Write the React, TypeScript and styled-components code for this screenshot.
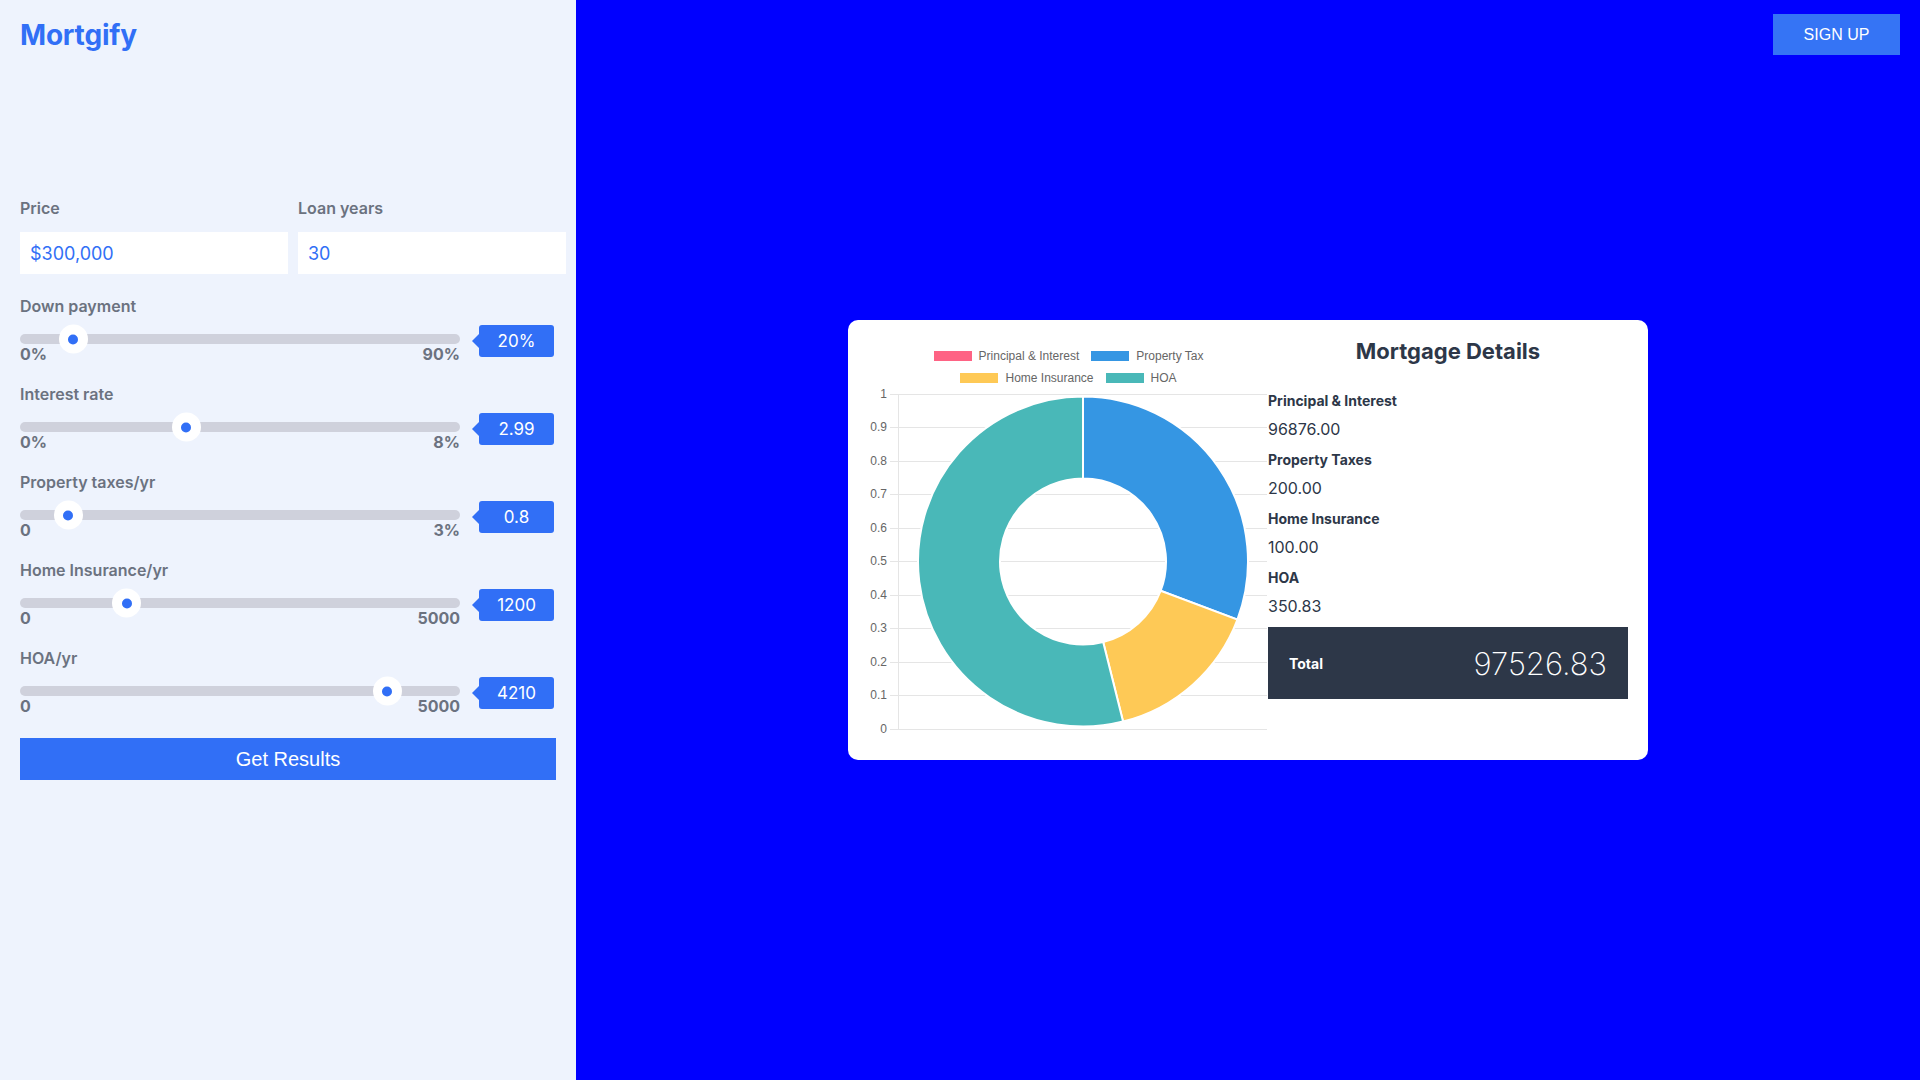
import React from 'react'
import styled, { createGlobalStyle } from 'styled-components'

const GlobalStyle = createGlobalStyle`
  * {
    box-sizing: border-box;
  }

  html,
  body {
    margin: 0;
    padding: 0;
  }

  body {
    font-family: Inter, 'Noto Sans', sans-serif;
  }
`

const Page = styled.div`
  display: flex;
  height: 1080px;
  overflow: hidden;
  width: 1920px;
`

const Sidebar = styled.aside`
  background: #eef3fd;
  flex-shrink: 0;
  padding: 17px 10px 0 20px;
  width: 576px;
`

const Logo = styled.h1`
  color: #316ff6;
  font-size: 28px;
  font-weight: 700;
  letter-spacing: -0.2px;
  line-height: 37px;
  margin: 0;
`

const Form = styled.form`
  margin-top: 144px;
`

const InputGrid = styled.div`
  column-gap: 10px;
  display: grid;
  grid-template-columns: 1fr 1fr;
  margin-bottom: 22px;
`

const FieldLabel = styled.label`
  color: #6b7280;
  display: block;
  font-size: 16px;
  font-weight: 600;
  line-height: 20px;
`

const TextInput = styled.input`
  background: #fff;
  border: none;
  color: #316ff6;
  display: block;
  font-family: Inter, sans-serif;
  font-size: 18px;
  height: 42px;
  margin-top: 14px;
  outline: none;
  padding: 0 10px;
  width: 100%;
`

const SliderBlock = styled.div`
  height: 88px;
`

const SliderRow = styled.div`
  align-items: flex-start;
  display: flex;
  gap: 19px;
`

const TrackColumn = styled.div`
  flex-shrink: 0;
  width: 440px;
`

const Track = styled.div`
  background: #cfd1dc;
  border-radius: 5px;
  height: 10px;
  margin-top: 18px;
  position: relative;
`

const Thumb = styled.span`
  background: #fff;
  border-radius: 50%;
  height: 29px;
  position: absolute;
  top: 50%;
  transform: translateY(-50%);
  width: 29px;

  &::after {
    background: #316ff6;
    border-radius: 50%;
    content: '';
    height: 10px;
    left: 50%;
    position: absolute;
    top: 50%;
    transform: translate(-50%, -50%);
    width: 10px;
  }
`

const RangeLabels = styled.div`
  color: #6b7280;
  display: flex;
  font-size: 16px;
  font-weight: 700;
  justify-content: space-between;
  line-height: 20px;
`

const ValueBadge = styled.div`
  align-items: center;
  background: #316ff6;
  border-radius: 3px;
  color: #fff;
  display: flex;
  font-size: 17px;
  height: 32px;
  justify-content: center;
  margin-top: 9px;
  position: relative;
  width: 75px;

  &::before {
    border-bottom: 7px solid transparent;
    border-right: 7px solid #316ff6;
    border-top: 7px solid transparent;
    content: '';
    left: -7px;
    position: absolute;
    top: 50%;
    transform: translateY(-50%);
  }
`

const SubmitButton = styled.button`
  background: #316ff6;
  border: none;
  color: #fff;
  display: block;
  font-family: 'Liberation Sans', Arial, sans-serif;
  font-size: 20px;
  height: 42px;
  margin-top: 2px;
  width: 536px;
`

const Main = styled.main`
  background: #0000ff;
  display: grid;
  flex: 1;
  grid-template-rows: 55px 1fr 55px;
`

const TopBar = styled.header`
  align-items: flex-start;
  display: flex;
  justify-content: flex-end;
  padding: 14px 20px 0 0;
`

const SignUp = styled.button`
  background: #3574f5;
  border: none;
  color: #fff;
  font-family: 'Liberation Sans', Arial, sans-serif;
  font-size: 16px;
  height: 41px;
  width: 127px;
`

const CardSlot = styled.div`
  align-items: center;
  display: flex;
  justify-content: center;
`

const Card = styled.section`
  background: #fff;
  border-radius: 10px;
  display: flex;
  height: 440px;
  padding: 17px 20px 0 10px;
  width: 800px;
`

const ChartColumn = styled.div`
  flex-shrink: 0;
  width: 410px;
`

const Legend = styled.div`
  margin-right: -11px;
  padding-top: 8px;
`

const LegendRow = styled.div`
  align-items: center;
  display: flex;
  gap: 12px;
  height: 22px;
  justify-content: center;
`

const LegendItem = styled.div`
  align-items: center;
  color: #666;
  display: flex;
  font-family: 'Liberation Sans', Arial, sans-serif;
  font-size: 12px;
  gap: 7px;
`

const Swatch = styled.span<{ $color: string }>`
  background: ${props => props.$color};
  display: block;
  height: 10px;
  width: 38px;
`

const ChartSvg = styled.svg`
  display: block;
  margin-top: -5px;
`

const Details = styled.div`
  color: #2d3748;
  width: 360px;
`

const DetailsTitle = styled.h2`
  font-size: 22px;
  font-weight: 700;
  line-height: 28px;
  margin: 0 0 26px;
  text-align: center;
`

const DetailLabel = styled.div`
  font-size: 14px;
  font-weight: 700;
  line-height: 20px;
  margin-bottom: 6px;
`

const DetailValue = styled.div`
  font-size: 16px;
  line-height: 24px;
  margin-bottom: 9px;
`

const TotalBox = styled.div`
  align-items: center;
  background: #2d3748;
  color: #fff;
  display: flex;
  height: 72px;
  justify-content: space-between;
  margin-top: 4px;
  padding: 0 21px;
`

const TotalLabel = styled.span`
  font-size: 14px;
  font-weight: 700;
`

const TotalValue = styled.span`
  font-size: 31px;
  font-weight: 200;
`

const sliders = [
  { label: 'Down payment', min: '0%', max: '90%', value: '20%', pos: 0.094 },
  { label: 'Interest rate', min: '0%', max: '8%', value: '2.99', pos: 0.369 },
  { label: 'Property taxes/yr', min: '0', max: '3%', value: '0.8', pos: 0.082 },
  { label: 'Home Insurance/yr', min: '0', max: '5000', value: '1200', pos: 0.225 },
  { label: 'HOA/yr', min: '0', max: '5000', value: '4210', pos: 0.858 },
]

const series = [
  { label: 'Principal & Interest', color: '#fe6384', value: 0 },
  { label: 'Property Tax', color: '#3596e3', value: 200 },
  { label: 'Home Insurance', color: '#fec956', value: 100 },
  { label: 'HOA', color: '#49b8b8', value: 350.83 },
]

const legendRows = [series.slice(0, 2), series.slice(2)]

const details = [
  { label: 'Principal & Interest', value: '96876.00' },
  { label: 'Property Taxes', value: '200.00' },
  { label: 'Home Insurance', value: '100.00' },
  { label: 'HOA', value: '350.83' },
]

const CX = 225
const CY = 177.5
const OUTER = 165
const INNER = 83
const TOP = 10
const STEP = 33.45

const arcPath = (a0: number, a1: number) => {
  const pt = (r: number, a: number) => `${CX + r * Math.sin(a)} ${CY - r * Math.cos(a)}`
  const large = a1 - a0 > Math.PI ? 1 : 0
  return [
    `M${pt(OUTER, a0)}`,
    `A${OUTER} ${OUTER} 0 ${large} 1 ${pt(OUTER, a1)}`,
    `L${pt(INNER, a1)}`,
    `A${INNER} ${INNER} 0 ${large} 0 ${pt(INNER, a0)}`,
    'Z',
  ].join(' ')
}

const DonutChart: React.FC = () => {
  const total = series.reduce((sum, s) => sum + s.value, 0)
  let angle = 0
  const slices = series
    .filter(s => s.value > 0)
    .map(s => {
      const a0 = angle
      angle += (s.value / total) * Math.PI * 2
      return { ...s, d: arcPath(a0, angle) }
    })
  const ticks = Array.from({ length: 11 }, (_, i) => i)

  return (
    <ChartSvg width={410} height={355} viewBox="0 0 410 355">
      {ticks.map(i => {
        const y = Math.round(TOP + i * STEP) + 0.5
        const text = i === 0 ? '1' : i === 10 ? '0' : `0.${10 - i}`
        return (
          <g key={i}>
            <line x1={32} x2={409} y1={y} y2={y} stroke="#e5e5e5" strokeWidth={1} />
            <text
              x={29}
              y={y}
              textAnchor="end"
              dominantBaseline="middle"
              fontFamily="'Liberation Sans', Arial, sans-serif"
              fontSize={12}
              fill="#666"
            >
              {text}
            </text>
          </g>
        )
      })}
      <line x1={40.5} x2={40.5} y1={TOP} y2={Math.round(TOP + 10 * STEP) + 0.5} stroke="#e5e5e5" />
      {slices.map(s => (
        <path key={s.label} d={s.d} fill={s.color} stroke="#fff" strokeWidth={2} />
      ))}
    </ChartSvg>
  )
}

const App: React.FC = () => {
  return (
    <>
      <GlobalStyle />
      <Page>
        <Sidebar>
          <Logo>Mortgify</Logo>
          <Form onSubmit={e => e.preventDefault()}>
            <InputGrid>
              <div>
                <FieldLabel>Price</FieldLabel>
                <TextInput defaultValue="$300,000" />
              </div>
              <div>
                <FieldLabel>Loan years</FieldLabel>
                <TextInput defaultValue="30" />
              </div>
            </InputGrid>
            {sliders.map(s => (
              <SliderBlock key={s.label}>
                <FieldLabel>{s.label}</FieldLabel>
                <SliderRow>
                  <TrackColumn>
                    <Track>
                      <Thumb style={{ left: `calc(${s.pos} * (100% - 29px))` }} />
                    </Track>
                    <RangeLabels>
                      <span>{s.min}</span>
                      <span>{s.max}</span>
                    </RangeLabels>
                  </TrackColumn>
                  <ValueBadge>{s.value}</ValueBadge>
                </SliderRow>
              </SliderBlock>
            ))}
            <SubmitButton type="submit">Get Results</SubmitButton>
          </Form>
        </Sidebar>
        <Main>
          <TopBar>
            <SignUp>SIGN UP</SignUp>
          </TopBar>
          <CardSlot>
            <Card>
              <ChartColumn>
                <Legend>
                  {legendRows.map((row, i) => (
                    <LegendRow key={i}>
                      {row.map(s => (
                        <LegendItem key={s.label}>
                          <Swatch $color={s.color} />
                          {s.label}
                        </LegendItem>
                      ))}
                    </LegendRow>
                  ))}
                </Legend>
                <DonutChart />
              </ChartColumn>
              <Details>
                <DetailsTitle>Mortgage Details</DetailsTitle>
                {details.map(d => (
                  <div key={d.label}>
                    <DetailLabel>{d.label}</DetailLabel>
                    <DetailValue>{d.value}</DetailValue>
                  </div>
                ))}
                <TotalBox>
                  <TotalLabel>Total</TotalLabel>
                  <TotalValue>97526.83</TotalValue>
                </TotalBox>
              </Details>
            </Card>
          </CardSlot>
          <div />
        </Main>
      </Page>
    </>
  )
}

export default App
